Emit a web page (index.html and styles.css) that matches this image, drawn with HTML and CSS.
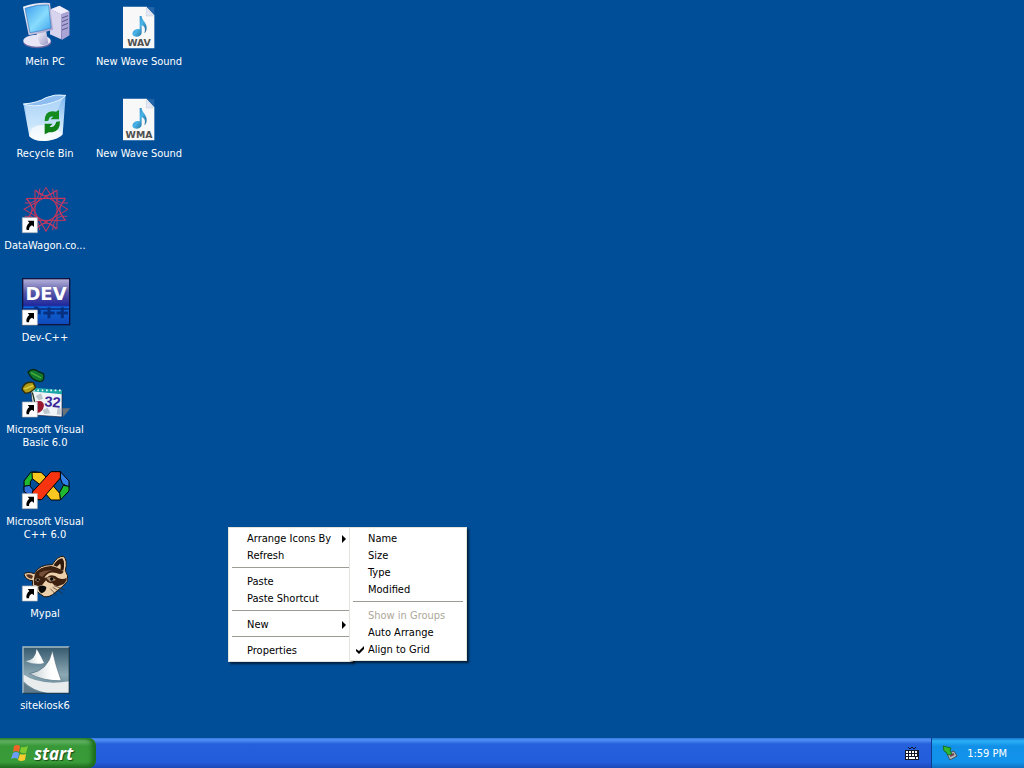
FILE: index.html
```html
<!DOCTYPE html>
<html lang="en">
  <head>
    <meta charset="utf-8" />
    <meta name="viewport" content="width=device-width, initial-scale=1.0" />
    <title>Desktop</title>
    <link rel="stylesheet" href="styles.css">
  </head>

  <body>
    <!-- shapes shared between icons -->
    <svg class="defs" aria-hidden="true">
      <defs>
        <linearGradient id="screen" x1="0" y1="0" x2="1" y2="1">
          <stop offset="0" stop-color="#3c9cf0" />
          <stop offset="0.55" stop-color="#88dcfc" />
          <stop offset="1" stop-color="#38a0ec" />
        </linearGradient>
        <linearGradient id="plastic" x1="0" y1="0" x2="1" y2="1">
          <stop offset="0" stop-color="#fff" />
          <stop offset="1" stop-color="#9c98c8" />
        </linearGradient>
        <linearGradient id="bin" x1="0" y1="0" x2="0" y2="1">
          <stop offset="0" stop-color="#78b4f0" />
          <stop offset="0.6" stop-color="#c4e2fa" />
          <stop offset="1" stop-color="#f4fcff" />
        </linearGradient>
        <linearGradient id="note" x1="0" y1="0" x2="1" y2="1">
          <stop offset="0" stop-color="#1c6ca8" />
          <stop offset="0.5" stop-color="#48b4e8" />
          <stop offset="1" stop-color="#14507c" />
        </linearGradient>
        <linearGradient id="dev" x1="0" y1="0" x2="0" y2="1">
          <stop offset="0" stop-color="#b8b4dc" />
          <stop offset="0.3" stop-color="#5858a8" />
          <stop offset="0.58" stop-color="#20289c" />
          <stop offset="0.62" stop-color="#0c68dc" />
          <stop offset="1" stop-color="#1048b8" />
        </linearGradient>
        <linearGradient id="kiosk" x1="0" y1="0" x2="0" y2="1">
          <stop offset="0" stop-color="#34586c" />
          <stop offset="0.6" stop-color="#8ca8b4" />
          <stop offset="1" stop-color="#547888" />
        </linearGradient>
        <linearGradient id="sail" x1="0" y1="0" x2="1" y2="0">
          <stop offset="0" stop-color="#c4d0d4" />
          <stop offset="0.7" stop-color="#fff" />
        </linearGradient>
        <g id="shortcut">
          <rect width="45" height="45" fill="#fff" />
          <path d="M0 0H45V45H0Z" fill="none" stroke="#b8b8b8" stroke-width="2" />
          <path d="M16 9H35V28L29 23C23 26 20 30 20 37H13C10 29 14 21 21 15Z" fill="#000" />
        </g>
        <g id="soundfile">
          <path d="M369 20H440L463 45V145H369Z" fill="#f8f8f8" />
          <path d="M440 20L463 45V22Z" fill="#2464a8" />
          <path d="M439 23V48H460Z" fill="#e4e8f4" stroke="#a8b4cc" stroke-width="1" />
          <path d="M419 48H425C426 62 441 69 440 84C440 91 437 97 433 100C438 84 432 78 425 76V99C423 109 412 112 403 109C395 106 396 95 404 90C409 86 415 86 419 88Z" fill="url(#note)" />
        </g>
      </defs>
    </svg>

    <main class="desktop">
      <div class="icons">
        <button class="icon">
          <svg viewBox="63 6 144 144">
            <path d="M152 28L178 17L208 34V106L186 119L150 103Z" fill="#8884bc" />
            <path d="M152 28L178 17L208 34L183 43Z" fill="#f0eefa" />
            <path d="M152 28L183 43V117L150 103Z" fill="#d8d4ee" />
            <path d="M183 43L208 34V106L186 119Z" fill="#aaa4d4" />
            <path d="M186 54L204 47M186 65L204 58M186 77L204 70M186 90L204 83" stroke="#5c5890" stroke-width="3" />
            <ellipse cx="112" cy="127" rx="42" ry="18" fill="#6864a0" />
            <ellipse cx="111" cy="122" rx="41" ry="18" fill="#e8e6f6" />
            <path d="M108 96L138 91L145 130C136 137 125 137 120 132Z" fill="url(#plastic)" />
            <path d="M69 20Q108 6 150 9L159 89Q122 102 86 106Z" fill="url(#plastic)" />
            <path d="M75 25Q112 12 146 15L153 84Q120 94 90 98Z" fill="url(#screen)" stroke="#3c78bc" stroke-width="2" />
          </svg>
          <span>Mein PC</span>
        </button>
        <button class="icon">
          <svg viewBox="63 27 144 144">
            <path d="M70 57Q112 54 138 38Q165 26 197 31L188 148Q180 162 138 168Q101 169 88 154Z" fill="url(#bin)" />
            <path d="M75 61Q104 67 142 53Q171 41 191 35L173 75Q112 119 84 126Z" fill="#c8e4fc" opacity="0.6" />
            <path d="M88 154L96 130Q114 116 139 121Q171 129 188 148Q170 168 130 168Q101 169 88 154Z" fill="#fff" opacity="0.65" />
            <path d="M70 57Q112 54 138 38Q165 26 197 31Q183 48 142 57Q101 68 70 57Z" fill="#8cbcf0" stroke="#e4f4ff" stroke-width="3" />
            <path d="M134 109Q134 78 158 79L168 80L177 75V103H151L160 95Q148 91 145 107Z" fill="#148c20" />
            <path d="M180 109Q180 139 157 142H147L134 148V116H158L149 125Q163 129 169 110Z" fill="#108018" />
          </svg>
          <span>Recycle Bin</span>
        </button>
        <button class="icon">
          <svg viewBox="63 33 144 144">
            <g fill="none" stroke="#d03458" stroke-width="3">
              <path id="tri" d="M138 37L195 136L81 136Z" />
              <use href="#tri" transform="rotate(30 138 103)" />
              <use href="#tri" transform="rotate(60 138 103)" />
              <use href="#tri" transform="rotate(90 138 103)" />
            </g>
            <g fill="none" stroke="#b83c6c" stroke-width="3">
              <path id="curl" d="M74 84Q116 91 120 40M158 41Q160 91 204 84M202 124Q160 116 158 166M119 166Q116 117 74 124" />
              <use href="#curl" transform="rotate(45 138 103)" />
            </g>
            <use href="#shortcut" x="67" y="128" />
          </svg>
          <span>DataWagon.co...</span>
        </button>
        <button class="icon">
          <svg viewBox="63 39 144 144">
            <rect x="68" y="41" width="141" height="138" fill="url(#dev)" stroke="#101440" stroke-width="4" />
            <path d="M71 132H206" stroke="#082878" stroke-width="4" />
            <text class="dev-text" x="138" y="106">DEV</text>
            <path d="M147 127V160M130 144H164M187 127V160M170 144H204M103 128Q121 128 118 148" fill="none" stroke="#083080" stroke-width="9" />
            <use href="#shortcut" x="67" y="135" />
          </svg>
          <span>Dev-C++</span>
        </button>
        <button class="icon">
          <svg viewBox="63 30 144 144">
            <path d="M185 145H211L190 170Z" fill="#687078" />
            <path d="M92 86L186 94V171L101 165Z" fill="#f0f4f8" stroke="#20203c" stroke-width="2" />
            <path d="M94 82L186 91V103L94 94Z" fill="#18a4a4" />
            <path d="M99 91H184" stroke="#e8f8f8" stroke-width="5" stroke-dasharray="5 8" />
            <path d="M107 108L123 100L129 116L116 121ZM128 151L143 143L151 160L133 162ZM173 144L182 145V165L170 163Z" fill="#bcc4cc" />
            <path d="M84 36Q98 22 114 34L131 42Q135 63 120 65Q94 62 84 36Z" fill="#107830" stroke="#082810" stroke-width="4" />
            <path d="M93 38L124 54" stroke="#50b438" stroke-width="4" />
            <path d="M66 88Q73 62 100 68L107 82Q92 101 75 99Z" fill="#b09c18" stroke="#302c08" stroke-width="4" />
            <path d="M73 87L99 77" stroke="#e4d84c" stroke-width="4" />
            <path d="M97 97Q101 111 104 126" fill="none" stroke="#183018" stroke-width="4" />
            <path d="M107 125Q130 117 132 137Q129 156 109 160Z" fill="#981830" />
            <text class="vb-text" x="132" y="139" transform="rotate(5 132 139)">32</text>
            <use href="#shortcut" x="67" y="126" />
          </svg>
          <span>Microsoft Visual Basic 6.0</span>
        </button>
        <button class="icon">
          <svg viewBox="63 21 144 144">
            <g stroke="#000" stroke-width="3" stroke-linejoin="round">
              <path d="M72 78L93 51H112L91 80V91L73 108Z" fill="#20b830" />
              <path d="M96 52H123L138 66V81L120 89L97 71Z" fill="#f8c820" />
              <path d="M72 94L88 91L99 104L95 127L72 109Z" fill="#3070d8" />
              <path d="M180 49L207 78V97L187 86L181 69Z" fill="#3080e8" />
              <path d="M207 94V108L181 135L178 114L190 91Z" fill="#20b830" />
              <path d="M140 100L159 92L179 115L181 135H153L136 115Z" fill="#f8c820" />
              <path d="M97 111L153 50H181V69L125 134H98Z" fill="#f83410" />
            </g>
            <use href="#shortcut" x="67" y="116" />
          </svg>
          <span>Microsoft Visual C++ 6.0</span>
        </button>
        <button class="icon">
          <svg viewBox="63 27 144 144">
            <path d="M72 88Q80 78 103 86Q117 58 157 59Q172 33 190 34Q204 45 196 77Q207 91 201 110Q188 126 166 142Q150 158 132 155L99 131Q97 117 98 107Q79 107 72 88Z" fill="#ecd0ac" stroke="#20140c" stroke-width="3" />
            <path d="M160 61Q174 40 187 40Q196 52 190 77L181 74Q184 61 180 56L171 65Z" fill="#30180c" />
            <path d="M78 89Q91 85 99 93L96 101Q84 101 78 89Z" fill="#54301c" />
            <path d="M105 86Q118 65 153 63Q174 66 191 80Q186 91 169 84Q145 78 133 98Q141 99 148 92Q163 88 174 99Q190 105 200 98Q200 115 184 120Q167 129 156 114Q143 117 138 106L127 119L115 124L102 119Q100 101 105 86Z" fill="#3c2010" />
            <path d="M118 83Q135 75 158 76Q136 81 128 95L118 93Z" fill="#745038" />
            <path d="M139 99Q154 91 168 105L150 110Z" fill="#a88c70" />
            <circle cx="155" cy="102" r="5" fill="#080808" />
            <path d="M105 105Q110 98 120 102L114 112Z" fill="#bca488" />
            <circle cx="113" cy="105" r="4" fill="#080808" />
            <path d="M115 125Q128 117 139 126Q139 140 125 145Q114 139 115 125Z" fill="#080808" />
            <path d="M158 127L188 145M162 122L193 134M151 131L170 151" stroke="#30241c" stroke-width="2" />
            <use href="#shortcut" x="67" y="123" />
          </svg>
          <span>Mypal</span>
        </button>
        <button class="icon">
          <svg viewBox="63 33 144 144">
            <rect x="68" y="35" width="141" height="140" fill="url(#kiosk)" />
            <path d="M69 118Q120 153 208 139V174H141Q95 165 69 137Z" fill="#e8ecec" />
            <path d="M69 142Q93 169 139 174H69Z" fill="#607c8c" />
            <path d="M77 79Q107 75 110 42Q124 66 132 84Q105 91 77 79Z" fill="url(#sail)" />
            <path d="M88 116Q145 107 157 47Q168 96 184 137Q132 139 88 116Z" fill="url(#sail)" stroke="#547080" stroke-width="2" />
            <path d="M69 175V36H208" fill="none" stroke="#a8bcc8" stroke-width="4" />
            <path d="M208 36V175H69" fill="none" stroke="#183c58" stroke-width="4" />
          </svg>
          <span>sitekiosk6</span>
        </button>
        <button class="icon">
          <svg viewBox="345 6 144 144">
            <use href="#soundfile" />
            <text class="file-text" x="417" y="137">WAV</text>
          </svg>
          <span>New Wave Sound</span>
        </button>
        <button class="icon">
          <svg viewBox="345 6 144 144">
            <use href="#soundfile" />
            <text class="file-text" x="417" y="137">WMA</text>
          </svg>
          <span>New Wave Sound</span>
        </button>
      </div>

      <div class="menu context" role="menu">
        <button role="menuitem" class="parent" aria-haspopup="true">Arrange Icons By</button>
        <button role="menuitem">Refresh</button>
        <hr />
        <button role="menuitem">Paste</button>
        <button role="menuitem">Paste Shortcut</button>
        <hr />
        <button role="menuitem" class="parent" aria-haspopup="true">New</button>
        <hr />
        <button role="menuitem">Properties</button>

        <div class="menu submenu" role="menu">
          <button role="menuitem">Name</button>
          <button role="menuitem">Size</button>
          <button role="menuitem">Type</button>
          <button role="menuitem">Modified</button>
          <hr />
          <button role="menuitem" disabled>Show in Groups</button>
          <button role="menuitem">Auto Arrange</button>
          <button role="menuitemcheckbox" aria-checked="true">
            <svg class="check" viewBox="0 0 8 8"><path d="M0 3L3 5L8 0V3L3 8L0 5Z" /></svg>Align to Grid
          </button>
        </div>
      </div>
    </main>

    <footer class="taskbar">
      <button class="start">
        <svg viewBox="0 0 18 18">
          <path d="M3 2Q6 0 9 2L8 8Q5 6 2 8Z" fill="#f06428" />
          <path d="M10 3Q13 4 17 2L15 9Q12 10 9 8Z" fill="#80cc30" />
          <path d="M2 9Q5 7 8 9L7 15Q4 13 0 15Z" fill="#6c9cf8" />
          <path d="M9 10Q12 11 15 10L14 16Q10 18 7 16Z" fill="#f8cc30" />
        </svg>
        start
      </button>
      <svg class="keyboard" viewBox="0 0 14 14">
        <path d="M3 1L5 3L7 1L9 3L11 1" fill="none" stroke="#101828" />
        <rect y="4" width="14" height="10" fill="#101828" />
        <path d="M1 6H13M1 9H13" stroke="#fff" stroke-dasharray="2 1" stroke-width="2" />
        <path d="M1 12H3M4 12H10M11 12H13" stroke="#fff" stroke-width="2" />
      </svg>
      <div class="tray">
        <svg viewBox="0 0 16 16">
          <path d="M5 9L12 6L15 11L8 15Z" fill="#b0bcc4" stroke="#405058" />
          <path d="M8 11L12 9" stroke="#803c48" stroke-width="2" />
          <path d="M1 1L9 3L8 6L10 9L6 10L4 7L2 6Z" fill="#30b830" stroke="#18702c" />
        </svg>
        <time datetime="13:59">1:59 PM</time>
      </div>
    </footer>
  </body>
</html>
```
FILE: styles.css
```css
body {
  margin: 0;
  height: 100vh;
  display: flex;
  flex-direction: column;
  overflow: hidden;
  background: #004e98;
  font-family: 'DejaVu Sans Condensed', 'Noto Sans', sans-serif;
  font-size: 11px;
}

button {
  border: none;
  padding: 0;
  background: none;
  font: inherit;
  color: inherit;
}

.defs {
  position: absolute;
  width: 0;
  height: 0;
}

.desktop {
  flex: 1;
  min-height: 0;
}

.icons {
  display: grid;
  grid-template-rows: repeat(8, 92px);
  grid-auto-flow: column;
  grid-auto-columns: 90px;
  column-gap: 4px;
}

.icon {
  display: flex;
  flex-direction: column;
  align-items: center;
  gap: 5px;
  padding-top: 2px;
  line-height: 13px;
  color: #fff;
}

.icon svg {
  width: 48px;
  height: 48px;
  flex: none;
  overflow: visible;
}

.dev-text {
  font: bold 54px 'DejaVu Sans', sans-serif;
  fill: #fff;
  text-anchor: middle;
}

.vb-text {
  font: bold 44px 'Liberation Sans', sans-serif;
  fill: #3c2898;
}

.file-text {
  font: bold 28px 'DejaVu Sans', sans-serif;
  fill: #505050;
  text-anchor: middle;
}

/* menus */
.menu {
  position: absolute;
  box-sizing: border-box;
  padding: 2px;
  border: 1px solid #e4e4dc;
  background: #fff;
  box-shadow: 2px 2px 2px rgba(0, 0, 0, 0.6);
  color: #000;
}

.context {
  left: 228px;
  top: 527px;
  width: 125px;
}

.submenu {
  left: 120px;
  top: -1px;
  width: 118px;
}

.menu button {
  display: flex;
  align-items: center;
  width: 100%;
  height: 17px;
  padding-left: 16px;
  white-space: nowrap;
}

.menu button:disabled {
  color: #aca899;
}

.menu hr {
  height: 1px;
  margin: 3px 1px 5px;
  border: none;
  background: #9c9c94;
}

.parent::after {
  content: '';
  margin-left: auto;
  margin-right: 4px;
  border: 4px solid transparent;
  border-left-color: #000;
  border-right: none;
}

.check {
  width: 8px;
  height: 8px;
  margin-left: -12px;
  margin-right: 4px;
}

/* taskbar */
.taskbar {
  display: flex;
  align-items: center;
  height: 30px;
  background: linear-gradient(#3a78e4, #5090f4 2px, #2660dc 6px, #245cdc 24px, #1c48b8);
  color: #fff;
}

.start {
  display: flex;
  align-items: center;
  gap: 5px;
  width: 96px;
  height: 30px;
  padding-left: 11px;
  border-radius: 0 8px 8px 0;
  background: linear-gradient(#348c34, #64b464 3px, #389838 8px, #389c38 24px, #247024);
  box-shadow: inset -4px 0 4px #1c6c1c;
  font: italic bold 17px 'Noto Sans', sans-serif;
  text-shadow: 1px 1px 1px #184818;
}

.start svg {
  width: 18px;
  height: 18px;
}

.keyboard {
  width: 14px;
  height: 14px;
  margin-left: auto;
  margin-right: 12px;
}

.tray {
  display: flex;
  align-items: center;
  gap: 9px;
  box-sizing: border-box;
  height: 30px;
  padding: 0 17px 0 10px;
  border-left: 1px solid #103c90;
  background: linear-gradient(#1478d0, #2cb0f4 3px, #1290e8 8px, #1294ec 24px, #1070c0);
}

.tray svg {
  width: 16px;
  height: 16px;
}
```
